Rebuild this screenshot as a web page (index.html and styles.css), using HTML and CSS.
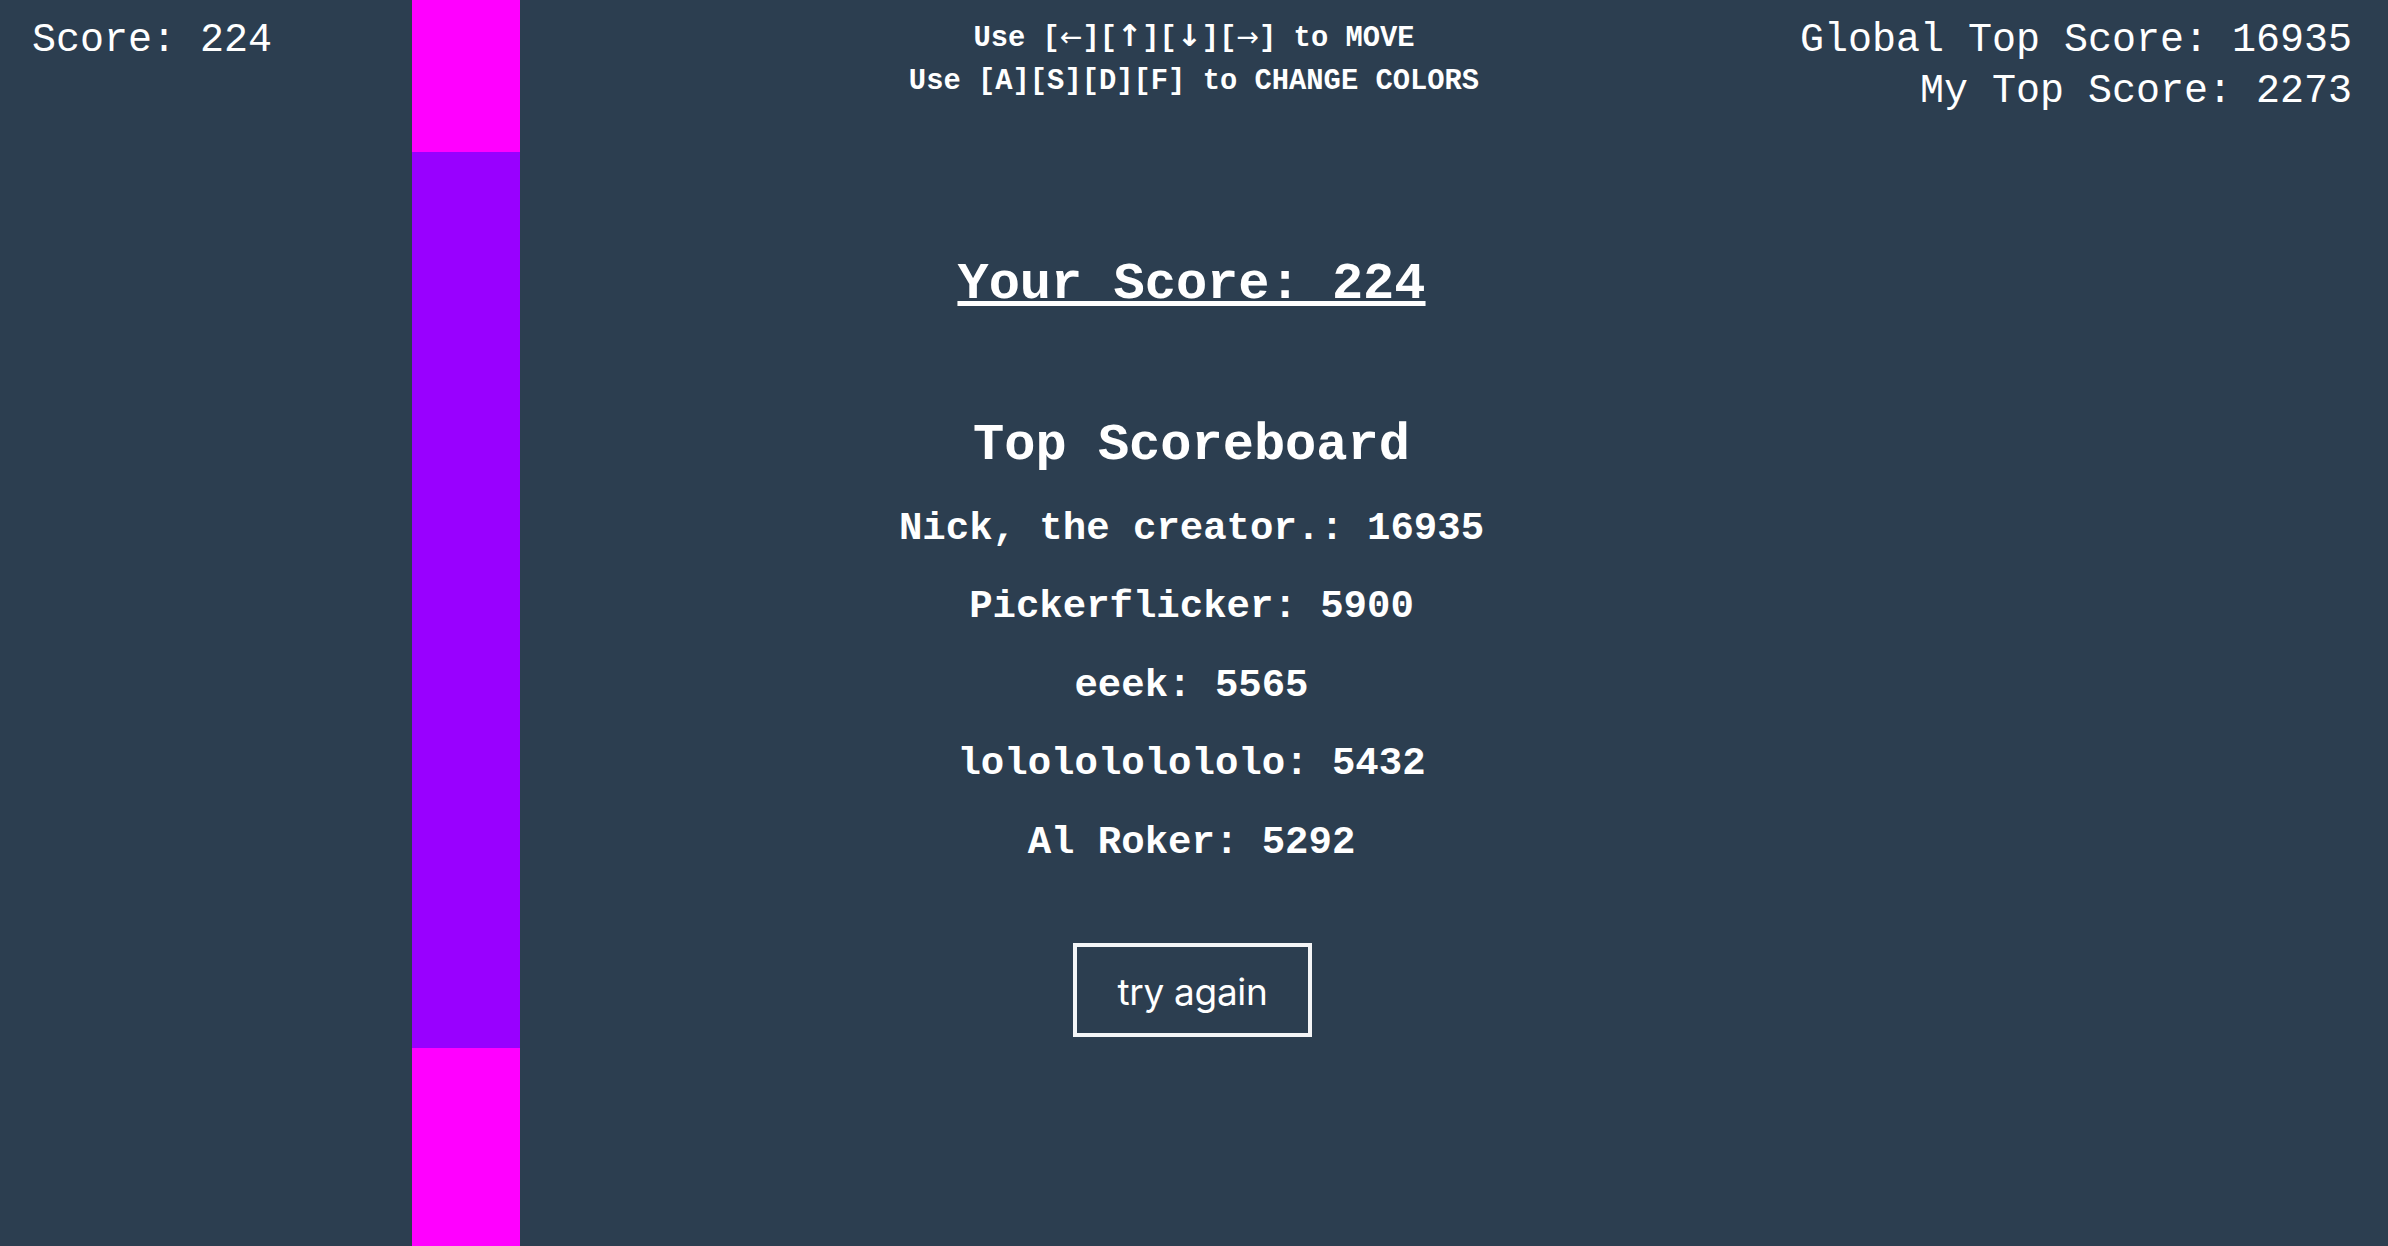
FILE: index.html
```html
<!DOCTYPE html>
<html>
<head>
<meta charset="utf-8">
<link rel="stylesheet" href="styles.css">
</head>
<body>
<div class="stage">
  <div class="column">
    <div class="seg seg-magenta seg-top"></div>
    <div class="seg seg-purple seg-mid"></div>
    <div class="seg seg-magenta seg-bottom"></div>
  </div>
  <header class="hud">
    <div class="hud-left">Score: 224</div>
    <div class="hud-center">
      <div>Use [<span class="arrow">←</span>][<span class="arrow arrow-v">↑</span>][<span class="arrow arrow-v">↓</span>][<span class="arrow">→</span>] to MOVE</div>
      <div>Use [A][S][D][F] to CHANGE COLORS</div>
    </div>
    <div class="hud-right">
      <div>Global Top Score: 16935</div>
      <div class="hud-second">My Top Score: 2273</div>
    </div>
  </header>
  <main class="overlay">
    <h2 class="your-score">Your Score: 224</h2>
    <h2 class="board-title">Top Scoreboard</h2>
    <ul class="board">
      <li>Nick, the creator.: 16935</li>
      <li>Pickerflicker: 5900</li>
      <li>eeek: 5565</li>
      <li>lololololololo: 5432</li>
      <li>Al Roker: 5292</li>
    </ul>
    <button class="retry">try again</button>
  </main>
</div>
</body>
</html>
```
FILE: styles.css
```css
html, body {
  margin: 0;
  padding: 0;
  background: #2c3e50;
  color: #ffffff;
  font-family: "Liberation Mono", "Courier New", monospace;
}

.stage {
  position: relative;
  width: 2388px;
  height: 1246px;
  overflow: hidden;
}

.column {
  position: absolute;
  left: 412px;
  top: 0;
  width: 108px;
  height: 1246px;
  display: flex;
  flex-direction: column;
}

.seg-magenta { background: #ff00ff; }
.seg-purple { background: #9900ff; }
.seg-top { height: 152px; }
.seg-mid { height: 896px; }
.seg-bottom { flex: 1; }

.hud {
  display: grid;
  grid-template-columns: 1fr auto 1fr;
  align-items: start;
  padding: 17px 36px 0 32px;
}

.hud-left {
  font-size: 40px;
  line-height: 48px;
  justify-self: start;
}

.hud-center {
  font-size: 28.8px;
  line-height: 43px;
  font-weight: bold;
  text-align: center;
  margin-top: -3px;
  margin-left: 4px;
}

.arrow {
  font-family: "DejaVu Sans", sans-serif;
  font-weight: normal;
  font-size: 27px;
}

.arrow-v {
  font-weight: bold;
  font-size: 30px;
}

.hud-right {
  font-size: 40px;
  line-height: 48px;
  text-align: right;
  justify-self: end;
}

.hud-second {
  margin-top: 3px;
}

.overlay {
  display: flex;
  flex-direction: column;
  align-items: center;
  margin-top: 137px;
  padding-right: 5px;
}

.your-score,
.board-title {
  margin: 0;
  font-size: 52px;
  line-height: 63.4px;
  font-weight: bold;
}

.your-score {
  text-decoration: underline;
  text-decoration-thickness: 5px;
  text-underline-offset: 3px;
}

.board-title {
  margin-top: 98px;
}

.board {
  list-style: none;
  margin: 27px 0 0;
  padding: 0;
  display: flex;
  flex-direction: column;
  align-items: center;
  gap: 30.5px;
}

.board li {
  font-size: 39px;
  line-height: 48px;
  font-weight: bold;
}

.retry {
  margin-top: 76px;
  margin-left: 2px;
  width: 239px;
  height: 94px;
  padding: 3px 0 0;
  background: transparent;
  border: 4px solid #f4f5f7;
  color: #ffffff;
  font-family: Inter, "Noto Sans", sans-serif;
  font-size: 37px;
  letter-spacing: -0.3px;
}
```
